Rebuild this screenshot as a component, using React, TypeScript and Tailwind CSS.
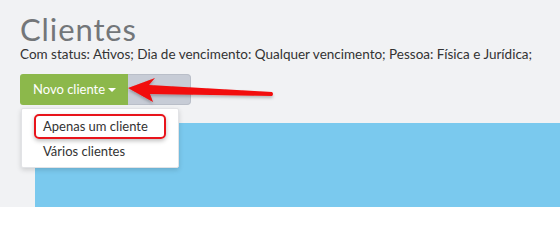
export default function App() {
  return (
    <div className="relative h-[207px] w-[560px] overflow-hidden bg-[#f1f2f4] font-['Lato',sans-serif]">
      <div className="pl-5 pt-[12px]">
        <h1 className="text-[31px] leading-[34px] font-normal tracking-[0.9px] text-[#737679]">Clientes</h1>
        <p className="text-[13.5px] leading-4 text-[#333]">
          Com status: Ativos; Dia de vencimento: Qualquer vencimento; Pessoa: Física e Jurídica;
        </p>

        <div className="relative mt-[12px] flex w-fit">
          <button className="flex h-[31px] w-[108px] items-center gap-[3px] rounded-l-[3px] bg-[#8cb84b] pl-[13px] text-[13px] text-white">
            Novo cliente
            <span className="mt-[1px] h-0 w-0 border-x-[4px] border-t-[4px] border-x-transparent border-t-white" />
          </button>
          <div className="h-[31px] w-[63px] rounded-r-[4px] border border-l-0 border-[#b9bec8] bg-[#c7ccd6]" />

          <div className="absolute left-[1px] top-full z-10 mt-[3px] w-[158px] rounded-[2px] border border-[#e2e3e6] bg-white py-[5px] shadow-[0_2px_5px_rgba(0,0,0,0.15)]">
            <div className="mx-[12px] rounded-[5px] border-2 border-[#e8141b] px-[7px] text-[13px] leading-[21px] text-[#333] shadow-[0_2px_4px_rgba(0,0,0,0.25)]">
              Apenas um cliente
            </div>
            <div className="px-[21px] pt-[2px] text-[13px] leading-[21px] text-[#333]">Vários clientes</div>
          </div>
        </div>

        <div className="ml-[15px] mt-[18px] h-[120px] bg-[#7ac9ee]" />
      </div>

      <svg className="absolute left-0 top-0" width="560" height="207" viewBox="0 0 560 207">
        <defs>
          <filter id="sh" x="-10%" y="-50%" width="120%" height="200%">
            <feDropShadow dx="0" dy="2" stdDeviation="1.5" floodColor="#000" floodOpacity="0.25" />
          </filter>
        </defs>
        <path
          d="M128 88 L155 78 L149 85 L272 92 Q274 94 272 96 L150 94 L153 102 Z"
          fill="#f20a0a"
          filter="url(#sh)"
        />
      </svg>
    </div>
  )
}
